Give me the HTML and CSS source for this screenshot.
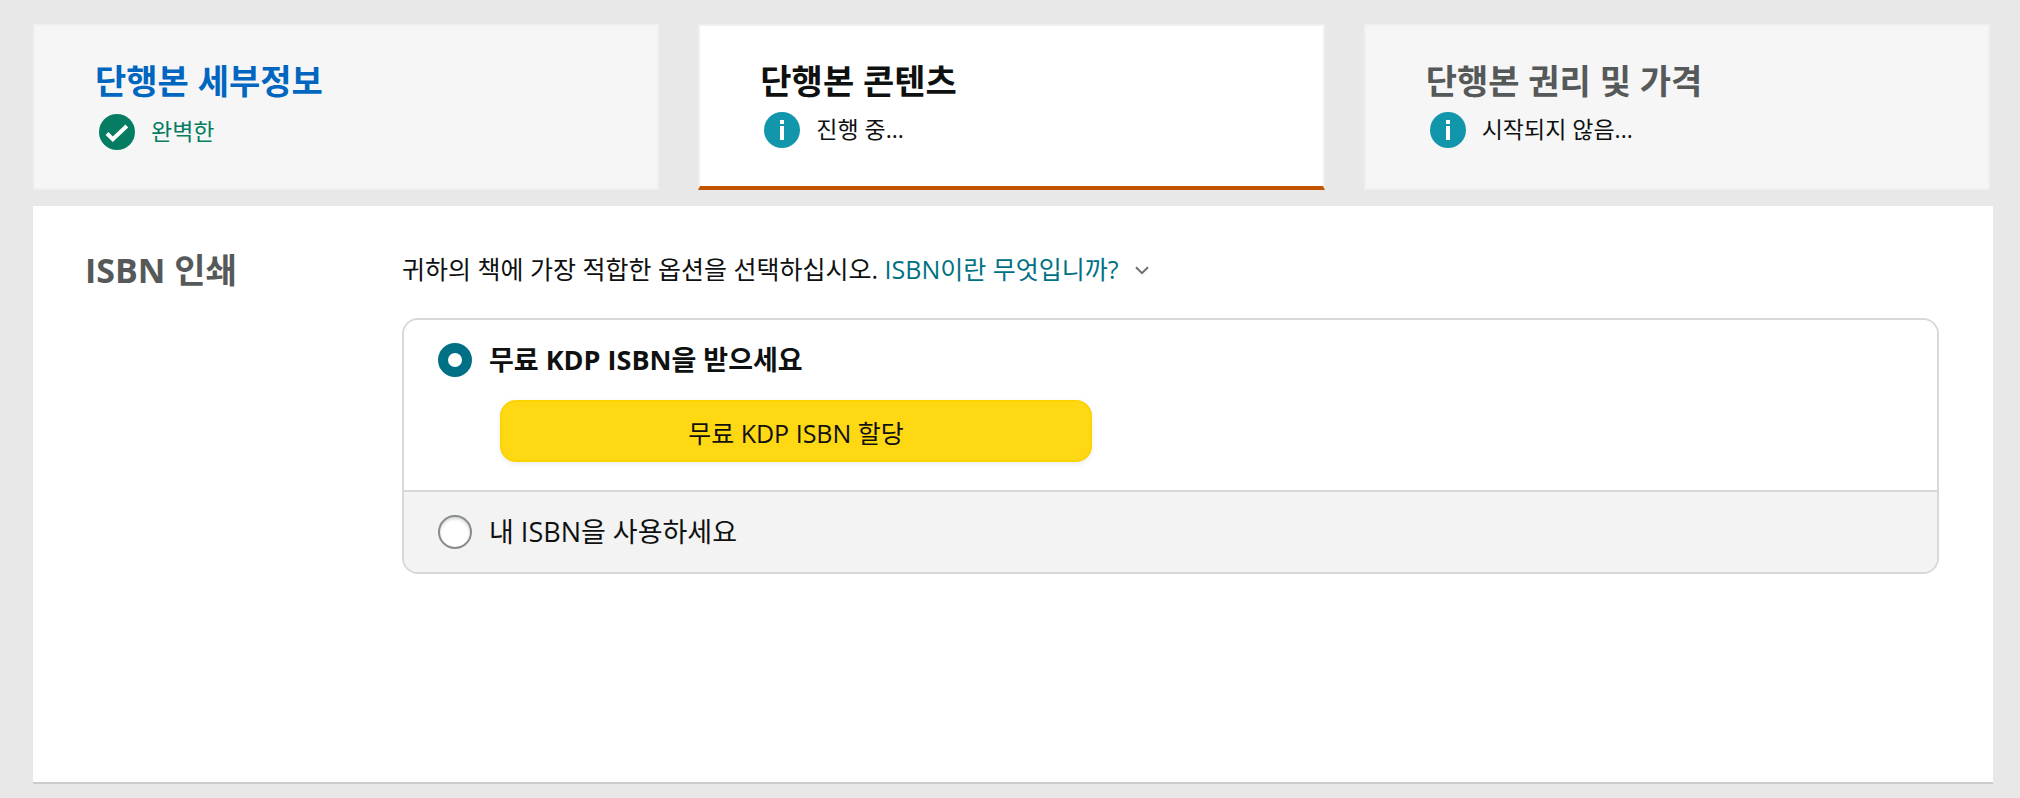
FILE: index.html
```html
<!doctype html>
<html lang="ko">
<head>
    <meta charset="UTF-8">
    <meta name="viewport" content="width=device-width, initial-scale=1.0">
    <title>단행본 콘텐츠</title>
    <link rel="stylesheet" href="styles.css">
</head>
<body>

<nav class="steps">
    <div class="step">
        <h2 class="step-title"><a href="#details">단행본 세부정보</a></h2>
        <div class="step-status complete">
            <svg class="status-icon" viewBox="0 0 36 36" aria-hidden="true">
                <circle cx="18" cy="18" r="18" fill="#067d62"/>
                <path d="M8 19.5l5.8 5.8L27.8 12" fill="none" stroke="#fff" stroke-width="4"/>
            </svg>
            <span>완벽한</span>
        </div>
    </div>

    <div class="step active">
        <h2 class="step-title">단행본 콘텐츠</h2>
        <div class="step-status">
            <svg class="status-icon" viewBox="0 0 36 36" aria-hidden="true">
                <circle cx="18" cy="18" r="18" fill="#1196ab"/>
                <path d="M16 8h4v4h-4zM16 14h4v14h-4z" fill="#fff"/>
            </svg>
            <span>진행 중...</span>
        </div>
    </div>

    <div class="step pending">
        <h2 class="step-title">단행본 권리 및 가격</h2>
        <div class="step-status">
            <svg class="status-icon" viewBox="0 0 36 36" aria-hidden="true">
                <circle cx="18" cy="18" r="18" fill="#1196ab"/>
                <path d="M16 8h4v4h-4zM16 14h4v14h-4z" fill="#fff"/>
            </svg>
            <span>시작되지 않음...</span>
        </div>
    </div>
</nav>

<main class="panel">
    <h2 class="section-title">ISBN 인쇄</h2>

    <div class="section-content">
        <p class="intro">
            귀하의 책에 가장 적합한 옵션을 선택하십시오.
            <a href="#isbn-help">ISBN이란 무엇입니까?<svg class="chevron" viewBox="0 0 14 9" aria-hidden="true"><path d="M1 1.2l6 6 6-6" fill="none" stroke="#6b7070" stroke-width="2"/></svg></a>
        </p>

        <form class="options">
            <div class="option selected">
                <div class="option-row">
                    <input type="radio" name="isbn" id="isbn-free" checked>
                    <label for="isbn-free">무료 KDP ISBN을 받으세요</label>
                </div>
                <button type="button" class="assign-button">무료 KDP ISBN 할당</button>
            </div>
            <div class="option">
                <div class="option-row">
                    <input type="radio" name="isbn" id="isbn-own">
                    <label for="isbn-own">내 ISBN을 사용하세요</label>
                </div>
            </div>
        </form>
    </div>
</main>

</body>
</html>
```
FILE: styles.css
```css
* {
    box-sizing: border-box;
}

body {
    display: flex;
    flex-direction: column;
    gap: 16px;
    min-height: 100vh;
    margin: 0;
    padding: 24px 27px 14px 33px;
    background-color: #e8e8e8;
    color: #0f1111;
    font-family: "Open Sans", "Noto Sans CJK KR", sans-serif;
    font-size: 25px;
}

h2,
p {
    margin: 0;
}

a {
    color: #007185;
    text-decoration: none;
}

.steps {
    display: grid;
    grid-template-columns: repeat(3, 1fr);
    gap: 39px;
    padding-right: 3px;
}

.step {
    height: 166px;
    padding: 35px 60px 0;
    background-color: #f6f6f6;
    border: 2px solid #f0f0f0;
}

.step.active {
    background-color: #fff;
    border-bottom: 4px solid #c45500;
}

.step-title {
    font-size: 34px;
    line-height: 40px;
    font-weight: 700;
}

.step-title a {
    color: #0066c0;
}

.pending .step-title {
    color: #565959;
}

.step-status {
    display: flex;
    align-items: flex-start;
    gap: 16px;
    margin-top: 11px;
    padding-left: 4px;
    font-size: 23px;
    line-height: 34px;
}

.step-status.complete {
    margin-top: 13px;
    color: #067d62;
}

.status-icon {
    width: 36px;
    height: 36px;
}

.panel {
    display: grid;
    grid-template-columns: 317px 1fr;
    flex: 1;
    padding: 44px 54px 44px 52px;
    background-color: #fff;
    border-bottom: 2px solid #ccc;
}

.section-title {
    color: #565959;
    font-size: 34px;
    line-height: 40px;
}

.intro {
    line-height: 38px;
}

.chevron {
    width: 14px;
    height: 9px;
    margin-left: 16px;
    vertical-align: 4px;
}

.options {
    margin-top: 30px;
    border: 2px solid #d5d9d9;
    border-radius: 16px;
    overflow: hidden;
}

.option {
    padding: 23px 34px;
    background-color: #f3f3f3;
    font-size: 27px;
    line-height: 34px;
}

.option.selected {
    padding-bottom: 28px;
    background-color: #fff;
    border-bottom: 2px solid #d5d9d9;
}

.selected label {
    font-weight: 700;
}

.option-row {
    display: flex;
    align-items: center;
    gap: 17px;
}

input[type="radio"] {
    appearance: none;
    width: 34px;
    height: 34px;
    margin: 0;
    background-color: #fff;
    border: 2px solid #888c8c;
    border-radius: 50%;
    box-shadow: inset 0 2px 3px #d5d9d9;
}

input[type="radio"]:checked {
    border: 10px solid #007185;
    box-shadow: none;
}

.assign-button {
    display: block;
    width: 100%;
    max-width: 592px;
    height: 62px;
    margin: 23px 0 0 62px;
    padding: 2px 0 0;
    background-color: #ffd814;
    border: 2px solid #fcd200;
    border-radius: 16px;
    box-shadow: 0 2px 5px rgba(213, 217, 217, 0.5);
    color: #0f1111;
    font-family: inherit;
    font-size: 25px;
    cursor: pointer;
}
```
